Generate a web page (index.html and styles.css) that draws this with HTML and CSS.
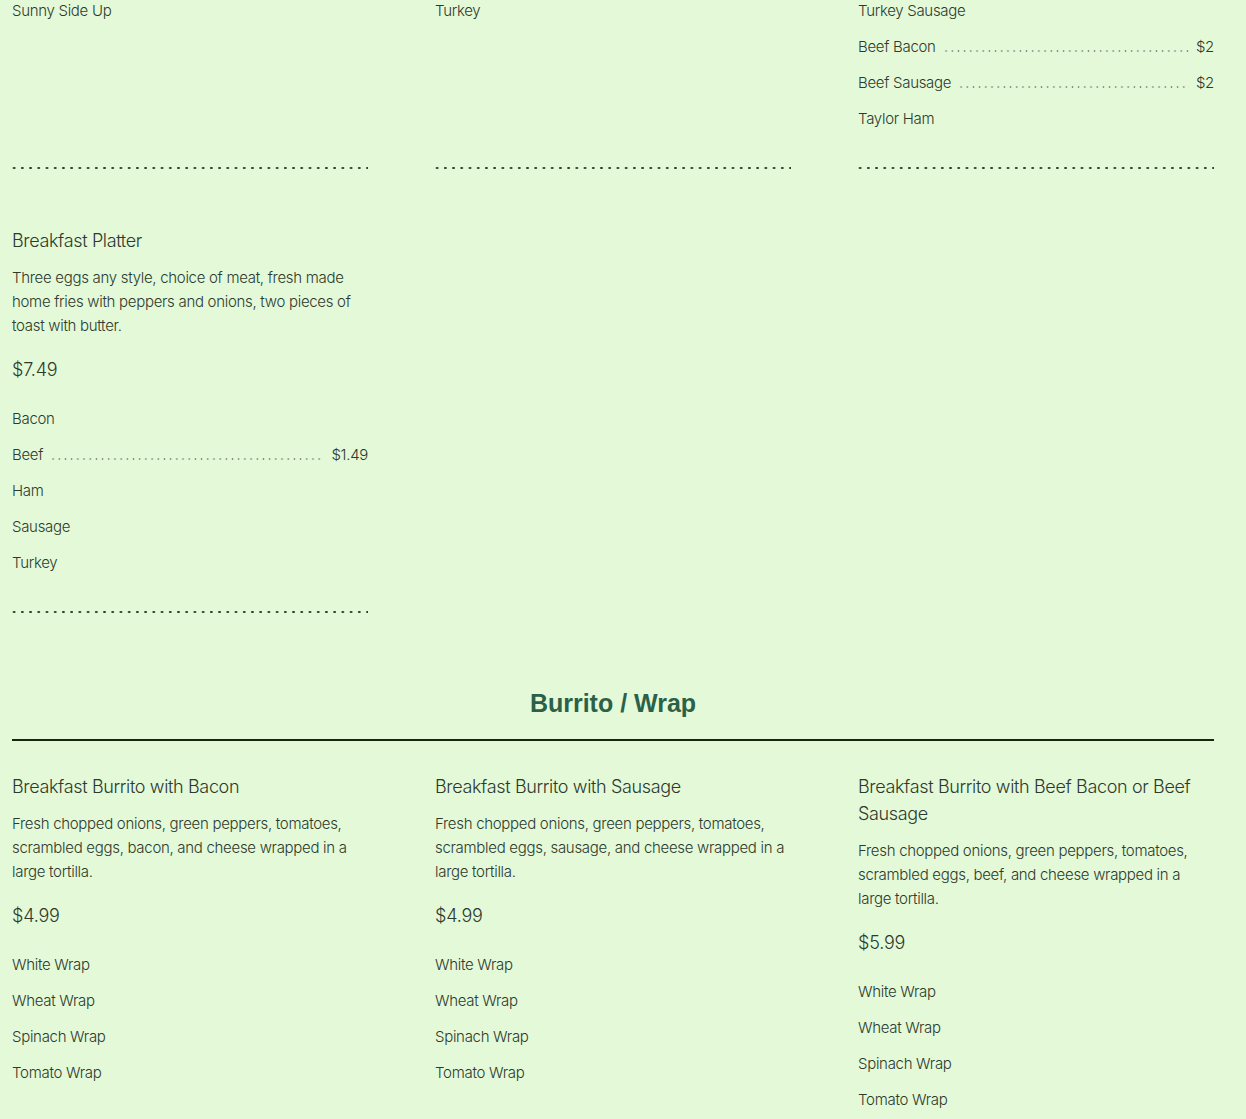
FILE: index.html
```html
<!DOCTYPE html>
<html lang="en">
<head>
<meta charset="utf-8">
<title>Menu</title>
<link rel="stylesheet" href="styles.css">
</head>
<body>
<main class="menu">
  <section class="section section-cont">
    <div class="grid">
      <article class="card">
        <ul class="opts">
          <li class="opt"><span class="opt-name">Sunny Side Up</span></li>
        </ul>
        <div class="sep"></div>
      </article>
      <article class="card">
        <ul class="opts">
          <li class="opt"><span class="opt-name">Turkey</span></li>
        </ul>
        <div class="sep"></div>
      </article>
      <article class="card">
        <ul class="opts">
          <li class="opt"><span class="opt-name">Turkey Sausage</span></li>
          <li class="opt"><span class="opt-name">Beef Bacon</span><span class="leader"></span><span class="opt-price">$2</span></li>
          <li class="opt"><span class="opt-name">Beef Sausage</span><span class="leader"></span><span class="opt-price">$2</span></li>
          <li class="opt"><span class="opt-name">Taylor Ham</span></li>
        </ul>
        <div class="sep"></div>
      </article>
      <article class="card">
        <h3 class="title">Breakfast Platter</h3>
        <p class="desc">Three eggs any style, choice of meat, fresh made home fries with peppers and onions, two pieces of toast with butter.</p>
        <div class="price">$7.49</div>
        <ul class="opts">
          <li class="opt"><span class="opt-name">Bacon</span></li>
          <li class="opt"><span class="opt-name">Beef</span><span class="leader"></span><span class="opt-price">$1.49</span></li>
          <li class="opt"><span class="opt-name">Ham</span></li>
          <li class="opt"><span class="opt-name">Sausage</span></li>
          <li class="opt"><span class="opt-name">Turkey</span></li>
        </ul>
        <div class="sep"></div>
      </article>
    </div>
  </section>

  <section class="section">
    <h2 class="section-title">Burrito / Wrap</h2>
    <hr class="rule">
    <div class="grid">
      <article class="card">
        <h3 class="title">Breakfast Burrito with Bacon</h3>
        <p class="desc">Fresh chopped onions, green peppers, tomatoes, scrambled eggs, bacon, and cheese wrapped in a large tortilla.</p>
        <div class="price">$4.99</div>
        <ul class="opts">
          <li class="opt"><span class="opt-name">White Wrap</span></li>
          <li class="opt"><span class="opt-name">Wheat Wrap</span></li>
          <li class="opt"><span class="opt-name">Spinach Wrap</span></li>
          <li class="opt"><span class="opt-name">Tomato Wrap</span></li>
        </ul>
        <div class="sep"></div>
      </article>
      <article class="card">
        <h3 class="title">Breakfast Burrito with Sausage</h3>
        <p class="desc">Fresh chopped onions, green peppers, tomatoes, scrambled eggs, sausage, and cheese wrapped in a large tortilla.</p>
        <div class="price">$4.99</div>
        <ul class="opts">
          <li class="opt"><span class="opt-name">White Wrap</span></li>
          <li class="opt"><span class="opt-name">Wheat Wrap</span></li>
          <li class="opt"><span class="opt-name">Spinach Wrap</span></li>
          <li class="opt"><span class="opt-name">Tomato Wrap</span></li>
        </ul>
        <div class="sep"></div>
      </article>
      <article class="card">
        <h3 class="title">Breakfast Burrito with Beef Bacon or Beef Sausage</h3>
        <p class="desc">Fresh chopped onions, green peppers, tomatoes, scrambled eggs, beef, and cheese wrapped in a large tortilla.</p>
        <div class="price">$5.99</div>
        <ul class="opts">
          <li class="opt"><span class="opt-name">White Wrap</span></li>
          <li class="opt"><span class="opt-name">Wheat Wrap</span></li>
          <li class="opt"><span class="opt-name">Spinach Wrap</span></li>
          <li class="opt"><span class="opt-name">Tomato Wrap</span></li>
        </ul>
        <div class="sep"></div>
      </article>
    </div>
  </section>
</main>
</body>
</html>
```

FILE: styles.css
```css
html, body {
  margin: 0;
  padding: 0;
  background: #e3f9d8;
}

body {
  font-family: Inter, Roboto, "Liberation Sans", Arial, sans-serif;
  font-weight: 300;
  color: #2e3a2e;
  letter-spacing: -0.3px;
}

.menu {
  width: 1202px;
  padding-left: 12px;
}

.section-cont {
  margin-top: -1px;
}

.grid {
  display: grid;
  grid-template-columns: repeat(3, 356px);
  column-gap: 67px;
  row-gap: 58px;
}

.card {
  display: flex;
  flex-direction: column;
}

.title {
  margin: 0;
  font-size: 18px;
  line-height: 27px;
  font-weight: 300;
  letter-spacing: -0.35px;
}

.desc {
  margin: 12px 0 0;
  font-size: 15px;
  line-height: 24px;
}

.price {
  margin-top: 18px;
  font-size: 18px;
  line-height: 27px;
  letter-spacing: -0.2px;
}

.price + .opts {
  margin-top: 24px;
}

.opts {
  list-style: none;
  margin: 0 0 36px;
  padding: 0;
  display: flex;
  flex-direction: column;
  gap: 12px;
}

.opt {
  display: flex;
  align-items: baseline;
  font-size: 15px;
  line-height: 24px;
}

.leader {
  flex: 1;
  height: 2px;
  margin: 0 7px;
  background-image: radial-gradient(circle, #848c81 0.7px, transparent 1.1px);
  background-size: 6.2px 2px;
  background-repeat: repeat-x;
}

.sep {
  margin-top: auto;
  height: 2px;
  background-image: radial-gradient(circle, #2f3c2b 0.95px, transparent 1.4px);
  background-size: 8.23px 2px;
  background-repeat: repeat-x;
  background-position: -2px 0;
}

.section-title {
  margin: 75px 0 0;
  text-align: center;
  font-family: "Liberation Sans", Arial, sans-serif;
  font-weight: 700;
  font-size: 25px;
  line-height: 30px;
  letter-spacing: 0;
  color: #2b6149;
}

.rule {
  margin: 21px 0 32px;
  border: 0;
  height: 2px;
  background: #17260f;
}
```
